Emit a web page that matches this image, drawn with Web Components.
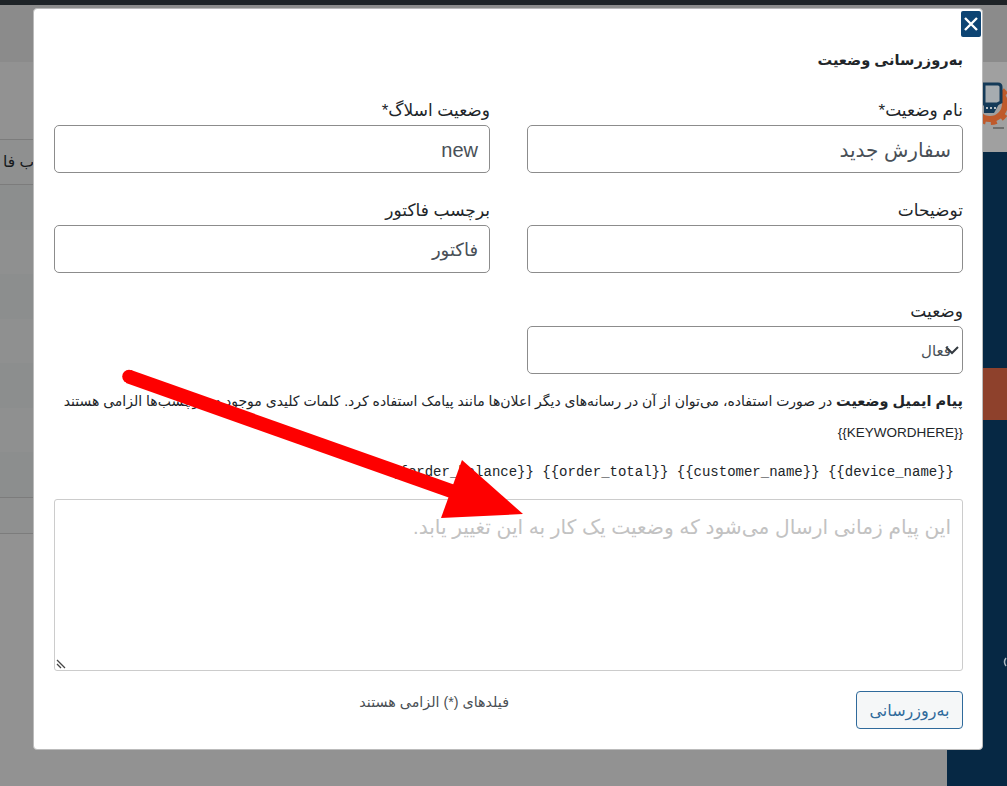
<!DOCTYPE html>
<html lang="fa" dir="rtl">
<head>
<meta charset="utf-8">
<title>status</title>
<style>
html, body { margin: 0; height: 100%; overflow: hidden; background: #929292; }
body { font-family: "Liberation Sans", "DejaVu Sans", sans-serif; }
</style>
</head>
<body>
<page-backdrop>
  <status-modal>
    <span slot="title">به‌روزرسانی وضعیت</span>
    <form-field label="نام وضعیت*" value="سفارش جدید"></form-field>
    <form-field label="وضعیت اسلاگ*" value="new"></form-field>
    <form-field label="توضیحات" value=""></form-field>
    <form-field label="برچسب فاکتور" value="فاکتور" style="--value-size: 18px"></form-field>
    <form-field label="وضعیت" value="فعال" select style="--value-size: 15px"></form-field>
    <email-hint></email-hint>
  </status-modal>
</page-backdrop>

<script>
const backdropTemplate = document.createElement('template')

backdropTemplate.innerHTML = `
<style>
:host {
    display: flex;
    flex-direction: column;
    position: relative;
    direction: ltr;
    width: 1007px;
    height: 786px;
    overflow: hidden;
    background: #929292;
}

.topbar { height: 5px; background: #1e2327; }
.strip { height: 57px; background: #8b8b8b; }

.main {
    flex: 1;
    display: flex;
    justify-content: space-between;
}

.rows { width: 34px; padding-top: 77px; }
.rows div { height: 44.57px; background: #8c8e8e; }
.rows div:nth-child(odd) { background: #8f9090; }

.rows .cut {
    height: 46px;
    border-top: 1px solid #7c7c7c;
    border-bottom: 1px solid #7c7c7c;
    background: #929292;
    box-sizing: border-box;
    direction: rtl;
    font: 15.5px/44px "Liberation Sans", "DejaVu Sans", sans-serif;
    color: #16191c;
    white-space: nowrap;
}

.rows .foot {
    height: 37px;
    border-top: 1px solid #7c7c7c;
    border-bottom: 1px solid #7c7c7c;
    background: #929292;
    box-sizing: border-box;
}

.side { width: 60px; display: flex; flex-direction: column; }
.logo { height: 90px; background: #a0a0a0; }
.logo svg { display: block; }

.navy {
    flex: 1;
    position: relative;
    padding-top: 216px;
    background: #062844;
}

.navy i { display: block; height: 52px; background: #8e412c; }
.navy svg { position: absolute; top: 504px; right: 0; }
</style>
<div class="topbar"></div>
<div class="strip"></div>
<div class="main">
    <div class="rows">
        <div class="cut">ب فا</div>
        <div></div><div></div><div></div><div></div><div></div><div></div><div></div>
        <div class="foot"></div>
    </div>
    <div class="side">
        <div class="logo">
            <svg width="60" height="90" viewBox="947 62 60 90">
                <circle cx="990" cy="104" r="15" fill="none" stroke="#bf5a2c" stroke-width="6"/>
                <circle cx="990" cy="104" r="19" fill="none" stroke="#bf5a2c" stroke-width="4" stroke-dasharray="6 5.4"/>
                <path d="M984 84 H998 q3 0 3 3 V102 L997 104 H984z" fill="#a6acb0" stroke="#143a58" stroke-width="3"/>
                <path d="M984 104 H999 L994 113 H984z" fill="#143a58"/>
                <path d="M986 108 h2 M990 108 h2 M994 108 h2" stroke="#b8c0c6" stroke-width="2"/>
                <rect x="993" y="127" width="11" height="2" fill="#6f6f6f"/>
            </svg>
        </div>
        <div class="navy">
            <i></i>
            <svg width="6" height="12" viewBox="0 0 6 12"><path d="M5 2 Q2 6 5 10" fill="none" stroke="#a9b6c0" stroke-width="1.5"/></svg>
        </div>
    </div>
</div>
<slot></slot>`

class PageBackdrop extends HTMLElement {
    connectedCallback() {
        const shadow = this.attachShadow({ mode: 'open' })
        shadow.appendChild(backdropTemplate.content.cloneNode(true))
    }
}

customElements.define('page-backdrop', PageBackdrop)

const modalTemplate = document.createElement('template')

modalTemplate.innerHTML = `
<style>
:host {
    display: block;
    position: absolute;
    top: 8px;
    left: 33px;
    width: 950px;
    height: 742px;
    box-sizing: border-box;
    padding: 0 19px 0 20px;
    direction: rtl;
    background: #fff;
    border-radius: 4px;
    border: 1px solid #bbb;
    color: #212529;
}

.close {
    position: absolute;
    top: 2px;
    right: 1px;
    width: 20px;
    height: 26px;
    padding: 0;
    border: 0;
    border-radius: 2px;
    background: #0d4473;
}

.close svg { display: block; margin: 0 auto; }

h2 {
    margin: 0;
    padding: 40px 0 0;
    height: 61px;
    box-sizing: border-box;
    font-size: 14.6px;
    line-height: 23px;
    font-weight: 700;
    color: #212529;
}

.grid {
    display: grid;
    grid-template-columns: 436px 436px;
    column-gap: 37px;
    row-gap: 26px;
    margin-top: 29px;
}

footer {
    display: flex;
    justify-content: space-between;
    align-items: flex-start;
    margin-top: 20px;
}

button.save {
    width: 107px;
    height: 38px;
    border: 1px solid #2f6a9b;
    border-radius: 4px;
    background: #f5f7f8;
    color: #2f6a9b;
    font: 16px "Liberation Sans", "DejaVu Sans", sans-serif;
}

.note {
    width: 455px;
    padding-top: 3px;
    font-size: 14.3px;
    line-height: 16px;
    color: #4a4f54;
}

.arrow { position: absolute; top: -9px; left: -34px; pointer-events: none; }
</style>
<button class="close" aria-label="close">
    <svg width="20" height="26" viewBox="0 0 20 26"><path d="M4 7 16 19 M16 7 4 19" stroke="#fff" stroke-width="2.4" fill="none"/></svg>
</button>
<h2><slot name="title"></slot></h2>
<div class="grid"><slot></slot></div>
<footer>
    <button class="save">به‌روزرسانی</button>
    <div class="note">فیلدهای (*) الزامی هستند</div>
</footer>
<svg class="arrow" width="1007" height="786" viewBox="0 0 1007 786">
    <circle cx="129" cy="376.5" r="6.8" fill="#fe0000"/>
    <path d="M131 370 458 486 450 498 126 383z" fill="#fe0000"/>
    <path d="M462 460 523 514 441 518z" fill="#fe0000"/>
</svg>`

class StatusModal extends HTMLElement {
    connectedCallback() {
        const shadow = this.attachShadow({ mode: 'open' })
        shadow.appendChild(modalTemplate.content.cloneNode(true))
    }
}

customElements.define('status-modal', StatusModal)

const fieldTemplate = document.createElement('template')

fieldTemplate.innerHTML = `
<style>
:host { display: block; }
:host([select]) { margin-top: 1px; }

label {
    display: block;
    height: 23px;
    font-size: 17px;
    line-height: 23px;
    color: #212529;
    margin-bottom: 3px;
}

.box {
    position: relative;
    height: 48px;
    box-sizing: border-box;
    padding: 0 11px;
    border: 1px solid #8c8c8c;
    border-radius: 5px;
    background: #fff;
    font-size: var(--value-size, 20px);
    line-height: 48px;
    color: #495057;
}

.chev { position: absolute; right: 3px; top: 18px; }
</style>
<label></label>
<div class="box"><span class="value"></span></div>`

class FormField extends HTMLElement {
    connectedCallback() {
        const shadow = this.attachShadow({ mode: 'open' })
        shadow.appendChild(fieldTemplate.content.cloneNode(true))

        shadow.querySelector('label').textContent = this.getAttribute('label')
        shadow.querySelector('.value').textContent = this.getAttribute('value')

        if (this.hasAttribute('select')) {
            shadow.querySelector('.box').insertAdjacentHTML('beforeend',
                '<svg class="chev" width="14" height="10" viewBox="0 0 14 10"><path d="M1 2 7 8 13 2" fill="none" stroke="#343a40" stroke-width="2"/></svg>')
        }
    }
}

customElements.define('form-field', FormField)

const hintTemplate = document.createElement('template')

hintTemplate.innerHTML = `
<style>
:host {
    display: block;
    grid-column: 1 / -1;
    margin-top: -14px;
}

.line {
    font-size: 14px;
    line-height: 30px;
    color: #212529;
    white-space: nowrap;
}

.line b { font-size: 14.5px; }

.key {
    margin-top: 2px;
    font-size: 13.5px;
    line-height: 29px;
    color: #212529;
}

code {
    display: block;
    direction: ltr;
    text-align: right;
    padding: 15px 9px 0 0;
    font: 14px/20px "Liberation Mono", monospace;
    color: #212529;
    white-space: nowrap;
}

.area {
    position: relative;
    height: 172px;
    margin-top: 17px;
    box-sizing: border-box;
    padding: 14px 11px;
    border: 1px solid #ccc;
    border-radius: 3px;
    font-size: 20.2px;
    line-height: 26px;
    color: #c2c2c2;
    white-space: nowrap;
}

.grip { position: absolute; left: 1px; bottom: 1px; }
</style>
<div class="line"><b>پیام ایمیل وضعیت</b> در صورت استفاده، می‌توان از آن در رسانه‌های دیگر اعلان‌ها مانند پیامک استفاده کرد. کلمات کلیدی موجود در برچسب‌ها الزامی هستند</div>
<div class="key">{{KEYWORDHERE}}</div>
<code>{{order_balance}} {{order_total}} {{customer_name}} {{device_name}}</code>
<div class="area">این پیام زمانی ارسال می‌شود که وضعیت یک کار به این تغییر یابد.
    <svg class="grip" width="10" height="10" viewBox="0 0 10 10"><path d="M1 1 9 9 M1 5 5 9" stroke="#444" stroke-width="1.3" fill="none"/></svg>
</div>`

class EmailHint extends HTMLElement {
    connectedCallback() {
        const shadow = this.attachShadow({ mode: 'open' })
        shadow.appendChild(hintTemplate.content.cloneNode(true))
    }
}

customElements.define('email-hint', EmailHint)
</script>
</body>
</html>
